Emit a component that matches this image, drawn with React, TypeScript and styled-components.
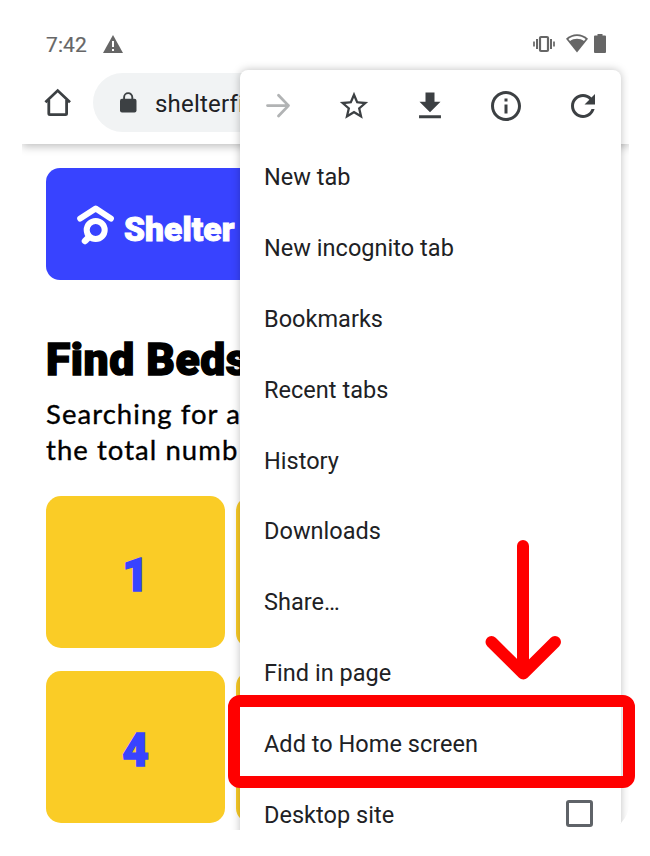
import React from "react";
import styled, { createGlobalStyle } from "styled-components";

const GlobalStyle = createGlobalStyle`
  *, *::before, *::after { box-sizing: border-box; }
  body { margin: 0; background: #fff; font-family: Roboto, "Liberation Sans", sans-serif; }
  svg { display: block; flex: none; }
`;

const Stage = styled.main`
  position: relative;
  width: 650px;
  height: 856px;
  padding-left: 22px;
  overflow: hidden;
`;

const Phone = styled.div`
  position: relative;
  width: 607px;
  height: 830px;
  overflow: hidden;
  background: #fff;
  border-radius: 0 0 26px 0;
`;

const StatusBar = styled.header`
  display: flex;
  align-items: center;
  height: 73px;
  padding: 14px 23px 0 24px;
  color: #666;
`;

const Clock = styled.time`
  width: 57px;
  padding-top: 2px;
  font-size: 21px;
  line-height: 24px;
  letter-spacing: 0.1px;
  -webkit-text-stroke: 0.2px currentColor;
`;

const StatusIcons = styled.div`
  display: flex;
  align-items: center;
  margin-left: auto;
  & > :nth-child(2) { margin: 0 6px 0 11px; }
`;

const Toolbar = styled.nav`
  position: relative;
  display: flex;
  align-items: flex-start;
  height: 71px;
  padding: 0 70px 0 22px;
  background: #fff;
  box-shadow: 0 2px 9px rgba(0, 0, 0, 0.28);
  clip-path: inset(0 0 -20px 0);
`;

const HomeButton = styled.div`
  width: 49px;
  padding-top: 14px;
`;

const AddressBar = styled.div`
  display: flex;
  align-items: center;
  flex: 1;
  height: 59px;
  padding-left: 26px;
  border-radius: 30px;
  background: #f1f3f4;
  color: #202124;
  font-size: 24px;
  letter-spacing: 0.2px;
  white-space: nowrap;
`;

const AddressText = styled.span`
  margin: 2px 0 0 18px;
`;

const Page = styled.section`
  padding: 24px 24px 0 24px;
`;

const Banner = styled.div`
  display: flex;
  align-items: center;
  height: 112px;
  padding-left: 30px;
  border-radius: 14px;
  background: #3843ff;
  color: #fff;
`;

const Brand = styled.span`
  margin: 11px 0 0 9px;
  font-size: 33.5px;
  font-weight: 900;
  line-height: 40px;
  letter-spacing: 0.1px;
  -webkit-text-stroke: 1px currentColor;
`;

const Title = styled.h1`
  margin: 53px 0 0;
  font-size: 44.5px;
  font-weight: 900;
  line-height: 54px;
  letter-spacing: 0.5px;
  white-space: nowrap;
  -webkit-text-stroke: 1.4px currentColor;
`;

const Intro = styled.p`
  margin: 9px 0 0;
  font-family: Lato, sans-serif;
  font-size: 27.5px;
  line-height: 36px;
  letter-spacing: 1.05px;
  white-space: nowrap;
  -webkit-text-stroke: 0.35px currentColor;
`;

const Cards = styled.div`
  display: grid;
  grid-template-columns: repeat(3, 179px);
  grid-auto-rows: 151.5px;
  gap: 23.5px 11px;
  margin-top: 28.3px;
`;

const Card = styled.div`
  display: flex;
  align-items: center;
  justify-content: center;
  padding-top: 5px;
  border-radius: 15px;
  background: #facc26;
  color: #3843ff;
  font-size: 46px;
  font-weight: 900;
  -webkit-text-stroke: 1.4px currentColor;
`;

const Menu = styled.aside`
  position: absolute;
  top: 70px;
  left: 218px;
  width: 381px;
  height: 790px;
  border-radius: 8px;
  background: #fff;
  color: #202124;
  box-shadow: 0 0 9px rgba(0, 0, 0, 0.25);
`;

const MenuActions = styled.div`
  display: flex;
  align-items: center;
  justify-content: space-between;
  height: 71px;
  padding: 0 20px;
  color: #3c4043;
`;

const MenuItem = styled.div`
  display: flex;
  align-items: center;
  justify-content: space-between;
  height: 70.85px;
  padding: 1.600px 28px 0 24px;
  font-size: 23.5px;
  letter-spacing: 0.03px;
`;

const Checkbox = styled.span`
  width: 27px;
  height: 27px;
  margin-top: -3px;
  border: 3px solid #5f6368;
  border-radius: 3px;
`;

const Highlight = styled.div`
  position: absolute;
  top: 695px;
  left: 228px;
  width: 407px;
  height: 93px;
  border: 12px solid #f00;
  border-radius: 12px;
`;

const Pointer = styled.svg`
  position: absolute;
  top: 538px;
  left: 483px;
`;

const WarningIcon = () => (
  <svg width="20" height="18" viewBox="0 0 20 18">
    <path d="M10 0 20 18H0Z" fill="currentColor" />
    <path d="M9 6h2v6H9zM9 14h2v2H9z" fill="#fff" />
  </svg>
);

const VibrateIcon = () => (
  <svg width="22" height="18" viewBox="0 0 22 18" fill="none" stroke="currentColor">
    <rect x="7" y="2" width="8" height="14" rx="1" strokeWidth="2.200" />
    <path d="M4 4v10M18 4v10" strokeWidth="2" />
    <path d="M1 6.500v5M21 6.500v5" strokeWidth="1.700" />
  </svg>
);

const WifiIcon = () => (
  <svg width="22" height="19" viewBox="0 0 22 19">
    <path d="M11 .3C6.800.3 3 1.900 0 4.800L11 18.600 22 4.800C19 1.900 15.200.3 11 .3Z" fill="currentColor" />
    <path d="M2.400 5C7.500 1.100 14.500 1.100 19.600 5L18 7C14 3.900 8 3.900 4 7Z" fill="#fff" />
  </svg>
);

const BatteryIcon = () => (
  <svg width="12" height="19" viewBox="0 0 12 19">
    <path d="M3.500 0h5v1.500H11q1 0 1 1V18q0 1-1 1H1q-1 0-1-1V2.500q0-1 1-1h2.500Z" fill="currentColor" />
  </svg>
);

const HomeIcon = () => (
  <svg width="28" height="30" viewBox="0 0 28 30" fill="none" stroke="#3c4043" strokeWidth="2.800" strokeLinejoin="round">
    <path d="M1.400 15.200 13.700 3.600 26 15.200" strokeLinejoin="miter" />
    <path d="M4.800 13v13.500q0 1.100 1.100 1.100h15.600q1.100 0 1.100-1.100V13" />
  </svg>
);

const LockIcon = () => (
  <svg width="18" height="22" viewBox="0 0 18 22">
    <path d="M5.100 8V5.200a4.100 4.100 0 0 1 8.200 0V8" fill="none" stroke="#3c4043" strokeWidth="1.900" />
    <rect x="1" y="6.800" width="16.500" height="13.700" rx="2" fill="#3c4043" />
  </svg>
);

const ShelterLogo = () => (
  <svg width="39" height="42" viewBox="0 0 39 42" fill="none" stroke="#fff" strokeWidth="6" strokeLinecap="round" strokeLinejoin="round">
    <path d="m4.200 15.500 15.500-10 15.200 10" />
    <circle cx="19.700" cy="27" r="9" strokeWidth="6" />
    <path d="m13 34-4 4" strokeWidth="6.500" />
  </svg>
);

const ForwardIcon = () => (
  <svg width="36" height="36" viewBox="0 0 36 36" fill="none" stroke="#b1b3b4" strokeWidth="2.800" strokeLinecap="round" strokeLinejoin="round">
    <path d="M7.500 17.600h21M18.500 7.200 28.500 17.600 18.500 28" />
  </svg>
);

const ActionIcon = ({ d, size = 36 }: { d: string; size?: number }) => (
  <svg width={size} height={size} viewBox="0 0 24 24" fill="currentColor">
    <path d={d} />
  </svg>
);

const STAR =
  "M22 9.240l-7.190-.620L12 2 9.190 8.630 2 9.240l5.460 4.730L5.820 21 12 17.270 18.180 21l-1.630-7.030L22 9.240zM12 15.400l-3.760 2.270 1-4.280-3.320-2.880 4.380-.380L12 6.100l1.710 4.040 4.380.380-3.320 2.880 1 4.280L12 15.400z";
const DOWNLOAD = "M19 9.200h-4V3H9v6.200H5l7 7 7-7zM4.700 18.200v1.900h14.600v-1.900z";
const INFO =
  "M11 7h2v2h-2zm0 4h2v6h-2zm1-9C6.480 2 2 6.480 2 12s4.480 10 10 10 10-4.480 10-10S17.520 2 12 2zm0 18c-4.410 0-8-3.590-8-8s3.590-8 8-8 8 3.590 8 8-3.590 8-8 8z";
const REFRESH =
  "M17.650 6.350C16.200 4.900 14.210 4 12 4c-4.420 0-7.990 3.580-7.990 8s3.570 8 7.990 8c3.730 0 6.840-2.550 7.730-6h-2.080c-.820 2.330-3.040 4-5.650 4-3.310 0-6-2.690-6-6s2.690-6 6-6c1.660 0 3.140.690 4.220 1.780L13 11h7V4l-2.350 2.350z";

const menuItems = [
  "New tab",
  "New incognito tab",
  "Bookmarks",
  "Recent tabs",
  "History",
  "Downloads",
  "Share…",
  "Find in page",
  "Add to Home screen",
];

export default function App() {
  return (
    <Stage>
      <GlobalStyle />
      <Phone>
        <StatusBar>
          <Clock>7:42</Clock>
          <WarningIcon />
          <StatusIcons>
            <VibrateIcon />
            <WifiIcon />
            <BatteryIcon />
          </StatusIcons>
        </StatusBar>
        <Toolbar>
          <HomeButton><HomeIcon /></HomeButton>
          <AddressBar>
            <LockIcon />
            <AddressText>shelterfi</AddressText>
          </AddressBar>
        </Toolbar>
        <Page>
          <Banner>
            <ShelterLogo />
            <Brand>Shelter</Brand>
          </Banner>
          <Title>Find Beds</Title>
          <Intro>Searching for a<br />the total numb</Intro>
          <Cards>
            {["1", "", "", "4", "", ""].map((n, i) => <Card key={i}>{n}</Card>)}
          </Cards>
        </Page>
        <Menu>
          <MenuActions>
            <ForwardIcon />
            <ActionIcon d={STAR} size={34} />
            <ActionIcon d={DOWNLOAD} />
            <ActionIcon d={INFO} />
            <ActionIcon d={REFRESH} />
          </MenuActions>
          {menuItems.map((label) => <MenuItem key={label}>{label}</MenuItem>)}
          <MenuItem>Desktop site<Checkbox /></MenuItem>
        </Menu>
      </Phone>
      <Highlight />
      <Pointer width="80" height="144" viewBox="0 0 80 144" fill="none" stroke="#f00" strokeWidth="12" strokeLinecap="round" strokeLinejoin="round">
        <path d="M40 8v124M8.500 104 40.300 135.500 72 104" />
      </Pointer>
    </Stage>
  );
}
